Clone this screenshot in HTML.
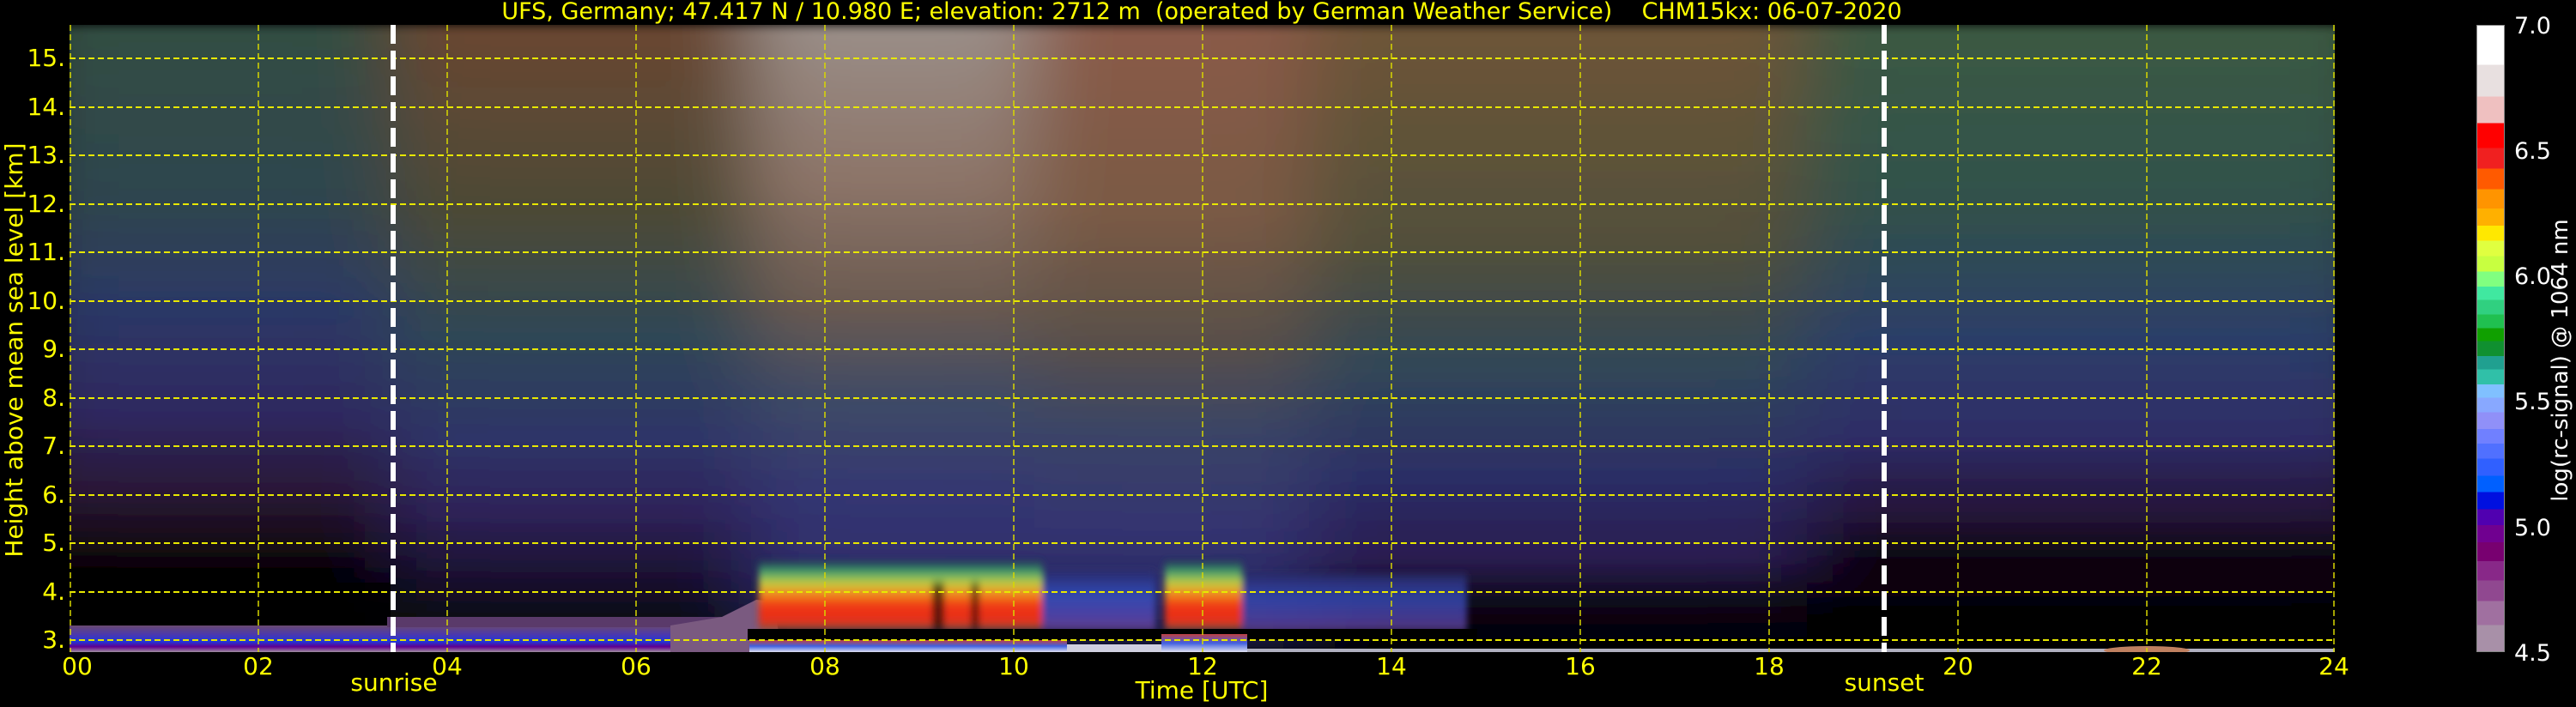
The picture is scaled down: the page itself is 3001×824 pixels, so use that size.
<!DOCTYPE html>
<html><head><meta charset="utf-8"><style>
html,body{margin:0;padding:0;background:#000;}
body{width:3001px;height:824px;position:relative;overflow:hidden;font-family:"DejaVu Sans","Liberation Sans",sans-serif;}
.t{position:absolute;color:#ffff00;font-size:27px;white-space:pre;line-height:1;}
.yl{position:absolute;color:#ffff00;font-size:28px;right:2925px;line-height:1;}
.xl{position:absolute;color:#ffff00;font-size:28px;line-height:1;transform:translateX(-50%);top:763px;}
.cl{position:absolute;color:#fff;font-size:27px;left:2929px;line-height:1;}
</style></head><body>
<div class="t" style="left:1400px;top:0px;transform:translateX(-50%);">UFS, Germany; 47.417 N / 10.980 E; elevation: 2712 m  (operated by German Weather Service)    CHM15kx: 06-07-2020</div>

<svg style="position:absolute;left:81px;top:29px" width="2639" height="731" viewBox="0 0 2639 731">
<defs>
<filter id="hb" x="-5%" y="0" width="110%" height="100%"><feGaussianBlur stdDeviation="45 6"/></filter>
<filter id="sb" x="-5%" y="-20%" width="110%" height="140%"><feGaussianBlur stdDeviation="4 5"/></filter>
<linearGradient id="cA" x1="0" y1="0" x2="0" y2="1">
<stop offset="0" stop-color="#324e42"/><stop offset="0.3" stop-color="#2e4450"/><stop offset="0.45" stop-color="#2c3866"/><stop offset="0.62" stop-color="#2e2860"/><stop offset="0.74" stop-color="#2a1838"/><stop offset="0.84" stop-color="#120810"/><stop offset="0.88" stop-color="#000"/><stop offset="1" stop-color="#000"/></linearGradient>
<linearGradient id="cB" x1="0" y1="0" x2="0" y2="1">
<stop offset="0" stop-color="#6a4632"/><stop offset="0.3" stop-color="#4c4a36"/><stop offset="0.5" stop-color="#2e4656"/><stop offset="0.66" stop-color="#2e3468"/><stop offset="0.78" stop-color="#2e2258"/><stop offset="0.88" stop-color="#1a1030"/><stop offset="1" stop-color="#000"/></linearGradient>
<linearGradient id="cC" x1="0" y1="0" x2="0" y2="1">
<stop offset="0" stop-color="#9a8e88"/><stop offset="0.25" stop-color="#8c7468"/><stop offset="0.45" stop-color="#6a5a50"/><stop offset="0.6" stop-color="#3e4a66"/><stop offset="0.75" stop-color="#343672"/><stop offset="0.88" stop-color="#2e2c6a"/><stop offset="1" stop-color="#1a1838"/></linearGradient>
<linearGradient id="cC2" x1="0" y1="0" x2="0" y2="1">
<stop offset="0" stop-color="#8a5a48"/><stop offset="0.3" stop-color="#7a5a44"/><stop offset="0.5" stop-color="#5a5048"/><stop offset="0.65" stop-color="#3a4466"/><stop offset="0.8" stop-color="#343470"/><stop offset="0.9" stop-color="#2a2a66"/><stop offset="1" stop-color="#141430"/></linearGradient>
<linearGradient id="cD" x1="0" y1="0" x2="0" y2="1">
<stop offset="0" stop-color="#6e5438"/><stop offset="0.35" stop-color="#52503a"/><stop offset="0.55" stop-color="#304658"/><stop offset="0.72" stop-color="#2c2e66"/><stop offset="0.85" stop-color="#2a1c50"/><stop offset="0.93" stop-color="#0a0614"/><stop offset="1" stop-color="#000"/></linearGradient>
<linearGradient id="cF" x1="0" y1="0" x2="0" y2="1">
<stop offset="0" stop-color="#3c5a42"/><stop offset="0.3" stop-color="#30504c"/><stop offset="0.5" stop-color="#2c3e68"/><stop offset="0.66" stop-color="#2e2c66"/><stop offset="0.78" stop-color="#241438"/><stop offset="0.86" stop-color="#0a040c"/><stop offset="1" stop-color="#000"/></linearGradient>
<linearGradient id="band" x1="0" y1="0" x2="0" y2="1">
<stop offset="0" stop-color="#6a4a70"/><stop offset="0.35" stop-color="#4a38b0"/><stop offset="0.6" stop-color="#2038d8"/><stop offset="0.8" stop-color="#600090"/><stop offset="1" stop-color="#a090a0"/></linearGradient>
<linearGradient id="cloud" x1="0" y1="0" x2="0" y2="1">
<stop offset="0" stop-color="#203a50"/><stop offset="0.15" stop-color="#40a070"/><stop offset="0.3" stop-color="#c0d040"/><stop offset="0.45" stop-color="#f09020"/><stop offset="0.65" stop-color="#f03010"/><stop offset="0.9" stop-color="#e03020"/><stop offset="1" stop-color="#306040"/></linearGradient>
<linearGradient id="bcloud" x1="0" y1="0" x2="0" y2="1">
<stop offset="0" stop-color="#2a2a6a"/><stop offset="0.4" stop-color="#3048b0"/><stop offset="0.8" stop-color="#5040a0"/><stop offset="1" stop-color="#603c80"/></linearGradient>
<linearGradient id="low" x1="0" y1="0" x2="0" y2="1">
<stop offset="0" stop-color="#c04040"/><stop offset="0.5" stop-color="#4060e0"/><stop offset="1" stop-color="#e0e0f0"/></linearGradient>
</defs>
<rect width="2639" height="731" fill="#000"/>
<g filter="url(#hb)">
<rect x="-60" y="0" width="434" height="731" fill="url(#cA)"/>
<rect x="374" y="0" width="420" height="731" fill="url(#cB)"/>
<rect x="794" y="0" width="330" height="731" fill="url(#cC)"/>
<rect x="1124" y="0" width="320" height="731" fill="url(#cC2)"/>
<rect x="1444" y="0" width="580" height="731" fill="url(#cD)"/>
<rect x="2024" y="0" width="680" height="731" fill="url(#cF)"/>
</g>
<rect x="0" y="650" width="374" height="50" fill="#000" opacity="0.8"/>
<rect x="0" y="700" width="792" height="31" fill="url(#band)"/>
<rect x="370" y="690" width="422" height="12" fill="#5a3a6a"/>
<path d="M700 700 L760 690 L800 670 L820 672 L830 731 L700 731Z" fill="#7a5a80"/>
<g filter="url(#sb)">
<rect x="803" y="626" width="330" height="80" fill="url(#cloud)"/>
<rect x="1133" y="636" width="132" height="70" fill="url(#bcloud)"/>
<rect x="1276" y="626" width="90" height="80" fill="url(#cloud)"/>
<rect x="1366" y="640" width="262" height="68" fill="url(#bcloud)" opacity="0.85"/>
<rect x="1005" y="650" width="14" height="56" fill="#000" opacity="0.6"/>
<rect x="1050" y="650" width="10" height="56" fill="#000" opacity="0.5"/>
</g>
<rect x="790" y="704" width="850" height="13" fill="#000"/>
<rect x="792" y="717" width="370" height="14" fill="url(#low)"/>
<rect x="1162" y="722" width="110" height="9" fill="#d0d0e0"/>
<rect x="1272" y="710" width="100" height="21" fill="url(#low)"/>
<rect x="1372" y="727" width="1267" height="4" fill="#b0b0c0"/>
<ellipse cx="2420" cy="729" rx="50" ry="5" fill="#c08060"/>
<g stroke="#e8e800" stroke-width="2" stroke-dasharray="7 4" fill="none">
<line x1="0" y1="39" x2="2639" y2="39"/><line x1="0" y1="96" x2="2639" y2="96"/><line x1="0" y1="152" x2="2639" y2="152"/><line x1="0" y1="209" x2="2639" y2="209"/><line x1="0" y1="265" x2="2639" y2="265"/><line x1="0" y1="322" x2="2639" y2="322"/><line x1="0" y1="378" x2="2639" y2="378"/><line x1="0" y1="435" x2="2639" y2="435"/><line x1="0" y1="491" x2="2639" y2="491"/><line x1="0" y1="548" x2="2639" y2="548"/><line x1="0" y1="604" x2="2639" y2="604"/><line x1="0" y1="661" x2="2639" y2="661"/><line x1="0" y1="717" x2="2639" y2="717"/>
</g>
<g stroke="#d8d800" stroke-width="1.5" stroke-dasharray="7 4" fill="none">
<line x1="1" y1="0" x2="1" y2="731"/><line x1="220" y1="0" x2="220" y2="731"/><line x1="440" y1="0" x2="440" y2="731"/><line x1="660" y1="0" x2="660" y2="731"/><line x1="880" y1="0" x2="880" y2="731"/><line x1="1100" y1="0" x2="1100" y2="731"/><line x1="1320" y1="0" x2="1320" y2="731"/><line x1="1540" y1="0" x2="1540" y2="731"/><line x1="1760" y1="0" x2="1760" y2="731"/><line x1="1980" y1="0" x2="1980" y2="731"/><line x1="2200" y1="0" x2="2200" y2="731"/><line x1="2420" y1="0" x2="2420" y2="731"/><line x1="2638" y1="0" x2="2638" y2="731"/>
</g>
<g stroke="#fff" stroke-width="6" stroke-dasharray="22 8">
<line x1="377" y1="0" x2="377" y2="731"/><line x1="2114" y1="0" x2="2114" y2="731"/>
</g>
</svg>

<div class="yl" style="top:54px">15.</div>
<div class="yl" style="top:111px">14.</div>
<div class="yl" style="top:167px">13.</div>
<div class="yl" style="top:224px">12.</div>
<div class="yl" style="top:280px">11.</div>
<div class="yl" style="top:337px">10.</div>
<div class="yl" style="top:393px">9.</div>
<div class="yl" style="top:450px">8.</div>
<div class="yl" style="top:506px">7.</div>
<div class="yl" style="top:563px">6.</div>
<div class="yl" style="top:619px">5.</div>
<div class="yl" style="top:676px">4.</div>
<div class="yl" style="top:732px">3.</div>

<div class="xl" style="left:90px">00</div>
<div class="xl" style="left:301px">02</div>
<div class="xl" style="left:521px">04</div>
<div class="xl" style="left:741px">06</div>
<div class="xl" style="left:961px">08</div>
<div class="xl" style="left:1181px">10</div>
<div class="xl" style="left:1401px">12</div>
<div class="xl" style="left:1621px">14</div>
<div class="xl" style="left:1841px">16</div>
<div class="xl" style="left:2061px">18</div>
<div class="xl" style="left:2281px">20</div>
<div class="xl" style="left:2501px">22</div>
<div class="xl" style="left:2719px">24</div>
<div class="xl" style="left:459px;top:782px">sunrise</div>
<div class="xl" style="left:2195px;top:782px">sunset</div>
<div class="xl" style="left:1400px;top:791px">Time [UTC]</div>
<div class="t" style="font-size:28px;left:17px;top:408px;transform:translate(-50%,-50%) rotate(-90deg);">Height above mean sea level [km]</div>

<div style="position:absolute;left:2885px;top:29px;width:33px;height:731px;border:1px solid #888;box-sizing:border-box;background:linear-gradient(to bottom,#fff 0 6.27%,#e8e0e0 6.27% 11.32%,#efc0c0 11.32% 15.57%,#ff0000 15.57% 19.54%,#f02020 19.54% 22.86%,#ff5a00 22.86% 26.1%,#ff9400 26.1% 29.2%,#ffb000 29.2% 31.94%,#ffe800 31.94% 34.39%,#e0ff40 34.39% 36.84%,#c8ff40 36.84% 39.29%,#80ff80 39.29% 41.67%,#40e8a0 41.67% 43.84%,#30d080 43.84% 46.14%,#20c050 46.14% 48.38%,#10a000 48.38% 50.4%,#109030 50.4% 52.78%,#20a090 52.78% 54.94%,#30c0a8 54.94% 57.32%,#80c0ff 57.32% 59.48%,#88a8ff 59.48% 61.79%,#9090f8 61.79% 64.46%,#7080ff 64.46% 66.83%,#5070ff 66.83% 69.21%,#3060ff 69.21% 71.95%,#0060ff 71.95% 74.55%,#0010e0 74.55% 77.29%,#5000b0 77.29% 79.81%,#700090 79.81% 82.55%,#780070 82.55% 85.58%,#882888 85.58% 88.68%,#904890 88.68% 92%,#a070a0 92% 95.8%,#a890a8 95.8% 100%);"></div>
<div class="cl" style="top:17px">7.0</div>
<div class="cl" style="top:163px">6.5</div>
<div class="cl" style="top:309px">6.0</div>
<div class="cl" style="top:455px">5.5</div>
<div class="cl" style="top:602px">5.0</div>
<div class="cl" style="top:748px">4.5</div>
<div class="t" style="color:#fff;font-size:26px;left:2983px;top:420px;transform:translate(-50%,-50%) rotate(-90deg);">log(rc-signal) @ 1064 nm</div>
</body></html>
